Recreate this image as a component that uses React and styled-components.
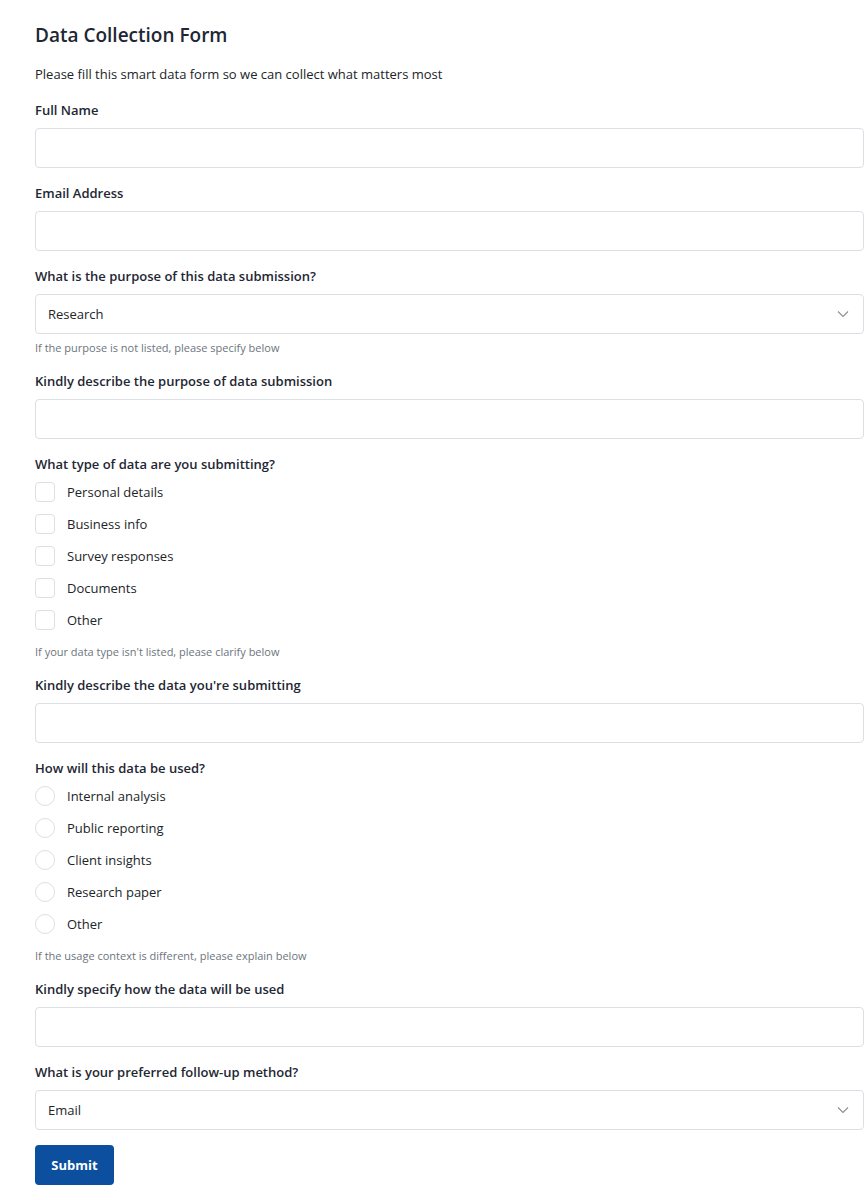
import React from "react";
import styled, { createGlobalStyle } from "styled-components";

const Global = createGlobalStyle`
  * { box-sizing: border-box; }
  body {
    margin: 0;
    background: #ffffff;
    font-family: "Open Sans", "Noto Sans", sans-serif;
    color: #212529;
  }
`;

const Page = styled.main`
  padding: 23px 0 16px 35px;
`;

const Form = styled.form`
  display: flex;
  flex-direction: column;
  width: 829px;
`;

const Title = styled.h1`
  margin: 0;
  font-size: 19px;
  line-height: 24px;
  font-weight: 600;
  color: #1e2733;
`;

const Intro = styled.p`
  margin: 18px 0 0;
  font-size: 13px;
  line-height: 18px;
  color: #212529;
`;

const Field = styled.div`
  display: flex;
  flex-direction: column;
  margin-top: ${(p) => p.$top || 16}px;
`;

const Label = styled.label`
  font-size: 13px;
  line-height: 18px;
  font-weight: 600;
  color: #1e2733;
  margin-bottom: 9px;
`;

const TextInput = styled.input`
  height: 40px;
  width: 100%;
  border: 1px solid #dcdfe3;
  border-radius: 4px;
  padding: 0 12px;
  font: inherit;
  font-size: 13px;
  background: #fff;
`;

const SelectBox = styled.div`
  height: 40px;
  border: 1px solid #dcdfe3;
  border-radius: 4px;
  display: flex;
  align-items: center;
  padding: 0 12px;
  font-size: 13px;
  color: #212529;
`;

const Chevron = styled.svg`
  margin-left: auto;
  margin-right: 2px;
`;

const Help = styled.div`
  margin-top: ${(p) => p.$top || 5}px;
  font-size: 11px;
  line-height: 17px;
  color: #6c757d;
`;

const OptionList = styled.div`
  display: flex;
  flex-direction: column;
  gap: 12px;
`;

const Option = styled.label`
  display: flex;
  align-items: center;
  gap: 12px;
  height: 20px;
  font-size: 13px;
  color: #212529;
`;

const Box = styled.span`
  width: 20px;
  height: 20px;
  border: 1px solid #dcdfe3;
  border-radius: ${(p) => (p.$round ? "50%" : "4px")};
  background: #fff;
  flex: none;
`;

const Button = styled.button`
  margin-top: 15px;
  align-self: flex-start;
  width: 79px;
  height: 40px;
  border: none;
  border-radius: 4px;
  background: #0b4f9e;
  color: #fff;
  font: inherit;
  font-size: 13px;
  font-weight: 700;
`;

const Select = ({ value }) => (
  <SelectBox>
    {value}
    <Chevron width="12" height="8" viewBox="0 0 12 8">
      <polyline points="1,1.5 6,6.5 11,1.5" fill="none" stroke="#8a8f96" strokeWidth="1.1" />
    </Chevron>
  </SelectBox>
);

const dataTypes = ["Personal details", "Business info", "Survey responses", "Documents", "Other"];
const uses = ["Internal analysis", "Public reporting", "Client insights", "Research paper", "Other"];

export default function App() {
  return (
    <Page>
      <Global />
      <Form onSubmit={(e) => e.preventDefault()}>
        <Title>Data Collection Form</Title>
        <Intro>Please fill this smart data form so we can collect what matters most</Intro>

        <Field $top={18}>
          <Label>Full Name</Label>
          <TextInput />
        </Field>
        <Field>
          <Label>Email Address</Label>
          <TextInput />
        </Field>
        <Field>
          <Label>What is the purpose of this data submission?</Label>
          <Select value="Research" />
          <Help>If the purpose is not listed, please specify below</Help>
        </Field>
        <Field>
          <Label>Kindly describe the purpose of data submission</Label>
          <TextInput />
        </Field>
        <Field>
          <Label>What type of data are you submitting?</Label>
          <OptionList>
            {dataTypes.map((t) => (
              <Option key={t}>
                <Box />
                {t}
              </Option>
            ))}
          </OptionList>
          <Help $top={13}>If your data type isn't listed, please clarify below</Help>
        </Field>
        <Field>
          <Label>Kindly describe the data you're submitting</Label>
          <TextInput />
        </Field>
        <Field>
          <Label>How will this data be used?</Label>
          <OptionList>
            {uses.map((t) => (
              <Option key={t}>
                <Box $round />
                {t}
              </Option>
            ))}
          </OptionList>
          <Help $top={13}>If the usage context is different, please explain below</Help>
        </Field>
        <Field>
          <Label>Kindly specify how the data will be used</Label>
          <TextInput />
        </Field>
        <Field>
          <Label>What is your preferred follow-up method?</Label>
          <Select value="Email" />
        </Field>
        <Button type="submit">Submit</Button>
      </Form>
    </Page>
  );
}
